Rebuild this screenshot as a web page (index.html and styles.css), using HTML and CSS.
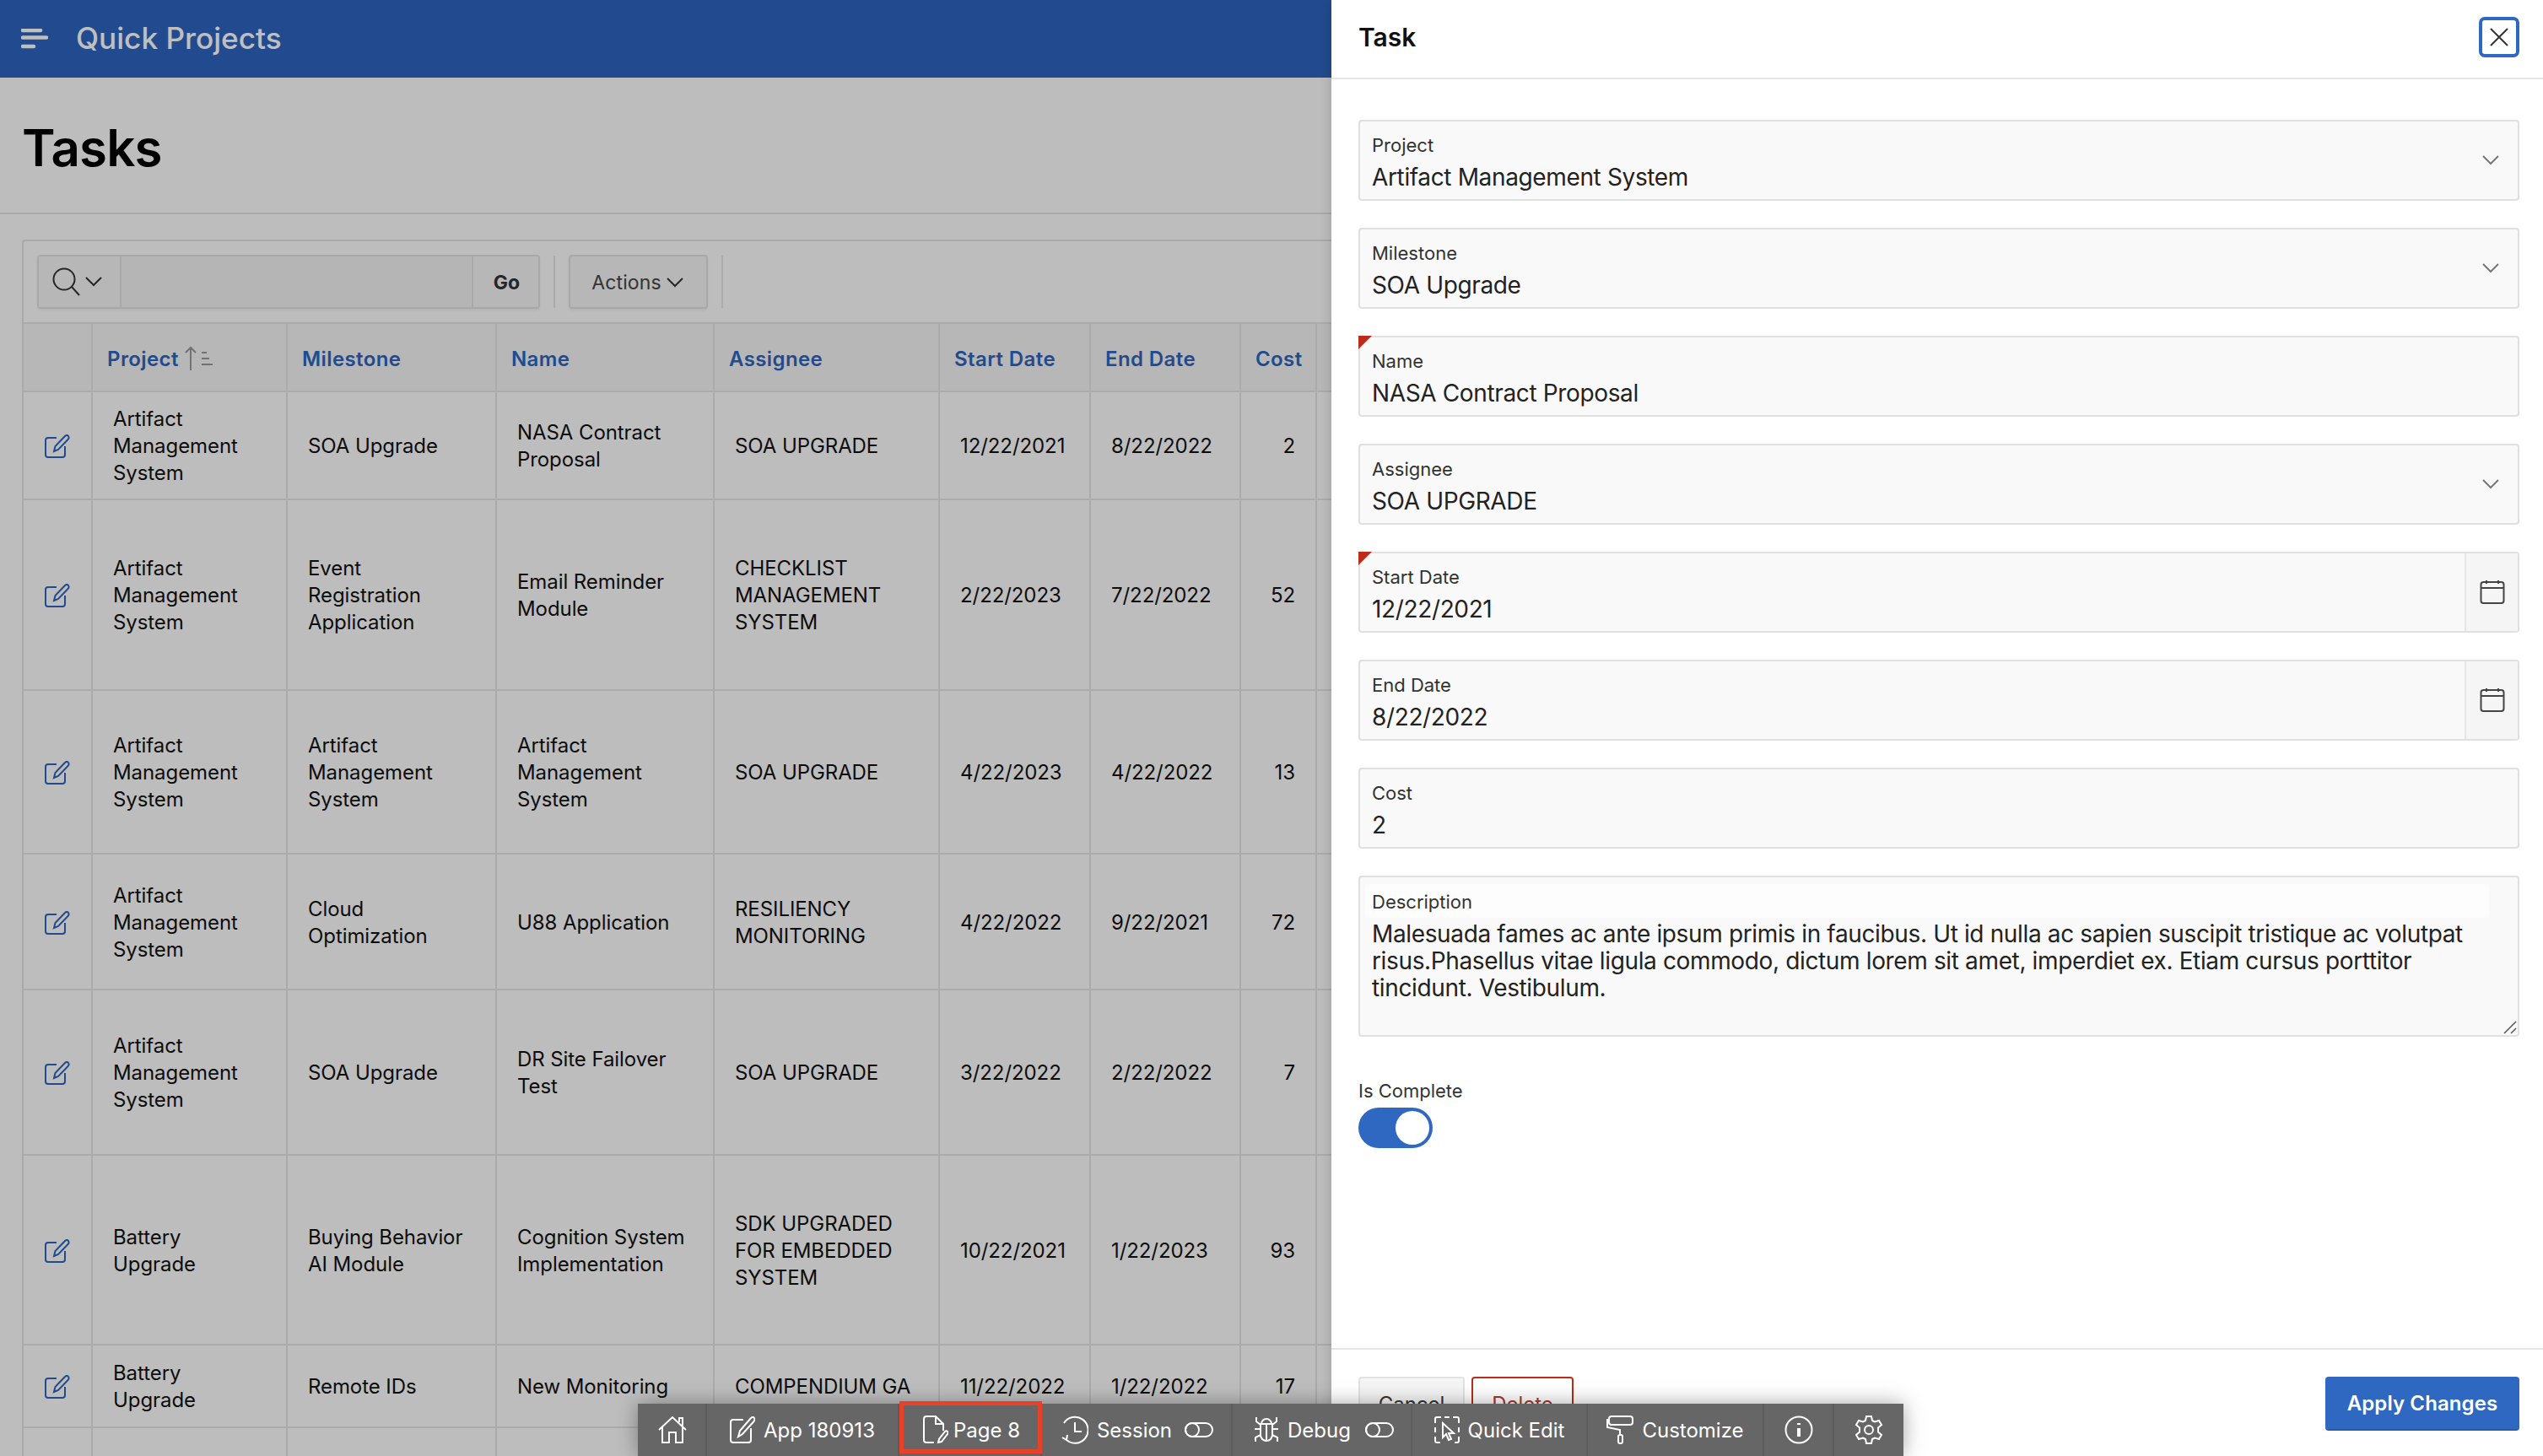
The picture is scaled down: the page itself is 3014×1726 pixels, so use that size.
FILE: index.html
```html
<!DOCTYPE html>
<html lang="en">
<head>
<meta charset="utf-8">
<title>Tasks - Quick Projects</title>
<link rel="stylesheet" href="styles.css">
</head>
<body>
<div class="page">
  <header class="topbar">
    <svg class="burger" width="32" height="24" viewBox="0 0 32 24"><path d="M2 2h21M2 10.500h28M2 21h13" /></svg>
    <span class="brand">Quick Projects</span>
  </header>
  <div class="titlebar"><h1>Tasks</h1></div>
  <section class="report">
    <div class="toolbar">
      <div class="searchgroup">
        <div class="searchicon">
          <svg width="34" height="34" viewBox="0 0 34 34" class="ico"><circle cx="14" cy="14" r="12.500"/><path d="M23 23l9 10"/></svg>
          <svg width="20" height="12" viewBox="0 0 20 12" class="ico"><path d="M1 1l9 9 9-9"/></svg>
        </div>
        <div class="searchinput"></div>
        <div class="go">Go</div>
      </div>
      <span class="tsep"></span>
      <div class="actions">Actions <svg width="20" height="12" viewBox="0 0 20 12" class="ico"><path d="M1 1l9 9 9-9"/></svg></div>
      <span class="tsep"></span>
    </div>
    <table class="grid">
      <colgroup>
        <col class="c0"><col class="c1"><col class="c2"><col class="c3"><col class="c4"><col class="c5"><col class="c6"><col class="c7"><col class="c8">
      </colgroup>
      <thead>
        <tr>
          <th></th>
          <th>Project <svg class="sort" width="34" height="30" viewBox="0 0 34 30"><path d="M8 29V2M2 8l6-6 6 6"/><path class="thin" d="M21 8h6M21 15h9M21 22h13"/></svg></th>
          <th>Milestone</th><th>Name</th><th>Assignee</th><th>Start Date</th><th>End Date</th><th>Cost</th><th></th>
        </tr>
      </thead>
      <tbody>
        <tr class="r1">
          <td class="ed"><svg class="edit" viewBox="0 0 30 28"><path d="M14 4H4a3 3 0 0 0-3 3v17a3 3 0 0 0 3 3h17a3 3 0 0 0 3-3V14"/><path d="M11 20l1.500-6L24 2c1.500-1.500 3-1.500 4 0s1 2.500-.500 4L16 18z"/></svg></td>
          <td>Artifact Management System</td><td>SOA Upgrade</td><td>NASA Contract Proposal</td><td>SOA UPGRADE</td><td>12/22/2021</td><td>8/22/2022</td><td class="num">2</td><td></td>
        </tr>
        <tr class="r2">
          <td class="ed"><svg class="edit" viewBox="0 0 30 28"><path d="M14 4H4a3 3 0 0 0-3 3v17a3 3 0 0 0 3 3h17a3 3 0 0 0 3-3V14"/><path d="M11 20l1.500-6L24 2c1.500-1.500 3-1.500 4 0s1 2.500-.500 4L16 18z"/></svg></td>
          <td>Artifact Management System</td><td>Event Registration Application</td><td>Email Reminder Module</td><td>CHECKLIST MANAGEMENT SYSTEM</td><td>2/22/2023</td><td>7/22/2022</td><td class="num">52</td><td></td>
        </tr>
        <tr class="r3">
          <td class="ed"><svg class="edit" viewBox="0 0 30 28"><path d="M14 4H4a3 3 0 0 0-3 3v17a3 3 0 0 0 3 3h17a3 3 0 0 0 3-3V14"/><path d="M11 20l1.500-6L24 2c1.500-1.500 3-1.500 4 0s1 2.500-.500 4L16 18z"/></svg></td>
          <td>Artifact Management System</td><td>Artifact Management System</td><td>Artifact Management System</td><td>SOA UPGRADE</td><td>4/22/2023</td><td>4/22/2022</td><td class="num">13</td><td></td>
        </tr>
        <tr class="r4">
          <td class="ed"><svg class="edit" viewBox="0 0 30 28"><path d="M14 4H4a3 3 0 0 0-3 3v17a3 3 0 0 0 3 3h17a3 3 0 0 0 3-3V14"/><path d="M11 20l1.500-6L24 2c1.500-1.500 3-1.500 4 0s1 2.500-.500 4L16 18z"/></svg></td>
          <td>Artifact Management System</td><td>Cloud Optimization</td><td>U88 Application</td><td>RESILIENCY MONITORING</td><td>4/22/2022</td><td>9/22/2021</td><td class="num">72</td><td></td>
        </tr>
        <tr class="r5">
          <td class="ed"><svg class="edit" viewBox="0 0 30 28"><path d="M14 4H4a3 3 0 0 0-3 3v17a3 3 0 0 0 3 3h17a3 3 0 0 0 3-3V14"/><path d="M11 20l1.500-6L24 2c1.500-1.500 3-1.500 4 0s1 2.500-.500 4L16 18z"/></svg></td>
          <td>Artifact Management System</td><td>SOA Upgrade</td><td>DR Site Failover Test</td><td>SOA UPGRADE</td><td>3/22/2022</td><td>2/22/2022</td><td class="num">7</td><td></td>
        </tr>
        <tr class="r6">
          <td class="ed"><svg class="edit" viewBox="0 0 30 28"><path d="M14 4H4a3 3 0 0 0-3 3v17a3 3 0 0 0 3 3h17a3 3 0 0 0 3-3V14"/><path d="M11 20l1.500-6L24 2c1.500-1.500 3-1.500 4 0s1 2.500-.500 4L16 18z"/></svg></td>
          <td>Battery Upgrade</td><td>Buying Behavior AI Module</td><td>Cognition System Implementation</td><td>SDK UPGRADED FOR EMBEDDED SYSTEM</td><td>10/22/2021</td><td>1/22/2023</td><td class="num">93</td><td></td>
        </tr>
        <tr class="r7">
          <td class="ed"><svg class="edit" viewBox="0 0 30 28"><path d="M14 4H4a3 3 0 0 0-3 3v17a3 3 0 0 0 3 3h17a3 3 0 0 0 3-3V14"/><path d="M11 20l1.500-6L24 2c1.500-1.500 3-1.500 4 0s1 2.500-.500 4L16 18z"/></svg></td>
          <td>Battery Upgrade</td><td>Remote IDs</td><td>New Monitoring</td><td>COMPENDIUM GA</td><td>11/22/2022</td><td>1/22/2022</td><td class="num">17</td><td></td>
        </tr>
        <tr class="r8"><td></td><td></td><td></td><td></td><td></td><td></td><td></td><td></td><td></td></tr>
      </tbody>
    </table>
  </section>
</div>
<div class="scrim"></div>

<aside class="modal">
  <div class="modal-head">
    <h2>Task</h2>
    <div class="close"><svg width="22" height="22" viewBox="0 0 22 22" class="x"><path d="M1 1l20 20M21 1L1 21"/></svg></div>
  </div>
  <div class="modal-body">
    <div class="field">
      <div class="field-main"><label>Project</label><div class="val">Artifact Management System</div></div>
      <svg class="chev" width="20" height="12" viewBox="0 0 20 12"><path d="M1 1l9 9 9-9"/></svg>
    </div>
    <div class="field">
      <div class="field-main"><label>Milestone</label><div class="val">SOA Upgrade</div></div>
      <svg class="chev" width="20" height="12" viewBox="0 0 20 12"><path d="M1 1l9 9 9-9"/></svg>
    </div>
    <div class="field req">
      <div class="field-main"><label>Name</label><div class="val">NASA Contract Proposal</div></div>
    </div>
    <div class="field">
      <div class="field-main"><label>Assignee</label><div class="val">SOA UPGRADE</div></div>
      <svg class="chev" width="20" height="12" viewBox="0 0 20 12"><path d="M1 1l9 9 9-9"/></svg>
    </div>
    <div class="field req">
      <div class="field-main"><label>Start Date</label><div class="val">12/22/2021</div></div>
      <div class="cal"><svg width="30" height="30" viewBox="0 0 30 30"><rect x="1.500" y="3" width="27" height="25" rx="3"/><path d="M1.500 10h27M8 1v4M22 1v4"/></svg></div>
    </div>
    <div class="field">
      <div class="field-main"><label>End Date</label><div class="val">8/22/2022</div></div>
      <div class="cal"><svg width="30" height="30" viewBox="0 0 30 30"><rect x="1.500" y="3" width="27" height="25" rx="3"/><path d="M1.500 10h27M8 1v4M22 1v4"/></svg></div>
    </div>
    <div class="field">
      <div class="field-main"><label>Cost</label><div class="val">2</div></div>
    </div>
    <div class="field area">
      <label>Description</label>
      <div class="val">Malesuada fames ac ante ipsum primis in faucibus. Ut id nulla ac sapien suscipit tristique ac volutpat risus.Phasellus vitae ligula commodo, dictum lorem sit amet, imperdiet ex. Etiam cursus porttitor tincidunt. Vestibulum.</div>
      <svg class="grip" width="16" height="16" viewBox="0 0 16 16"><path d="M1 15L15 1M9 15l6-6"/></svg>
    </div>
    <div class="switch-field">
      <label>Is Complete</label>
      <div class="switch"><span class="knob"></span></div>
    </div>
  </div>
  <div class="modal-foot">
    <div class="btn cancel">Cancel</div>
    <div class="btn delete">Delete</div>
    <div class="btn apply">Apply Changes</div>
  </div>
</aside>

<nav class="devbar">
  <div class="dv s-home"><svg class="di" width="34" height="34" viewBox="0 0 34 34"><path d="M1 17L17 2l16 15M5 14v18h8V20h8v12h8V14M25 8V3h4v9"/></svg></div>
  <div class="dv s-app"><svg class="di" width="30" height="32" viewBox="0 0 30 32"><path d="M16 4H4a3 3 0 0 0-3 3v21a3 3 0 0 0 3 3h18a3 3 0 0 0 3-3V14"/><path d="M10 24l2-7L25 2c1.500-1.500 3-1.500 4 0s.500 3-1 4.500L15 21z"/></svg><span>App 180913</span></div>
  <div class="dv s-page"><svg class="di" width="30" height="34" viewBox="0 0 30 34"><path d="M13 32H4a3 3 0 0 1-3-3V4a3 3 0 0 1 3-3h11l9 9v8"/><path d="M15 1v9h9"/><path d="M18 32l1-4 7-9c1-1 2-1 3 0s1 2 0 3l-7 9z"/></svg><span>Page 8</span></div>
  <div class="dv s-session"><svg class="di" width="32" height="34" viewBox="0 0 32 34"><path d="M6 29A15.500 15.500 0 1 0 3 9M16 8v11h8M1 26l5 3 1-6"/></svg><span>Session</span><svg class="di tg" width="34" height="20" viewBox="0 0 34 20"><rect x="1" y="2" width="32" height="16" rx="8"/><circle cx="9" cy="10" r="8"/></svg></div>
  <div class="dv s-debug"><svg class="di" width="30" height="32" viewBox="0 0 30 32"><path d="M9 9a6 6 0 0 1 12 0zM8 9h14v13a7 7 0 0 1-14 0zM15 9v20M8 15H1M22 15h7M8 22l-6 3v5M22 22l6 3v5M8 10L3 6V1M22 10l5-4V1"/></svg><span>Debug</span><svg class="di tg" width="34" height="20" viewBox="0 0 34 20"><rect x="1" y="2" width="32" height="16" rx="8"/><circle cx="9" cy="10" r="8"/></svg></div>
  <div class="dv s-quick"><svg class="di" width="30" height="32" viewBox="0 0 30 32"><path d="M8 1H3a2 2 0 0 0-2 2v5M1 13v6M1 24v5a2 2 0 0 0 2 2h4M12 1h6M22 1h5a2 2 0 0 1 2 2v5M29 13v6M29 24v5a2 2 0 0 1-2 2h-3"/><path d="M10 8v17l4-4 3 7 3-1-3-7h6z"/></svg><span>Quick Edit</span></div>
  <div class="dv s-custom"><svg class="di" width="32" height="34" viewBox="0 0 32 34"><rect x="3" y="1" width="28" height="10" rx="3"/><path d="M3 5H1v9l15 3v6"/><rect x="14" y="23" width="5" height="10" rx="2"/></svg><span>Customize</span></div>
  <div class="dv s-info"><svg class="di" width="34" height="34" viewBox="0 0 34 34"><circle cx="17" cy="17" r="15.500"/><path class="bold" d="M17 15v10M17 9v2"/></svg></div>
  <div class="dv s-gear"><svg class="di" width="34" height="34" viewBox="0 0 34 34"><circle cx="17" cy="17" r="5"/><path d="M14 1h6l1 5 3 1.500 5-1.500 3 5-4 3.500v5l4 3.500-3 5-5-1.500-3 1.500-1 5h-6l-1-5-3-1.500-5 1.500-3-5 4-3.500v-5L2 11l3-5 5 1.500L13 6z"/></svg></div>
</nav>
</body>
</html>
```
FILE: styles.css
```css
* { box-sizing: border-box; }
html, body { margin: 0; height: 100%; overflow: hidden; }
body {
  font-family: Inter, "Liberation Sans", sans-serif;
  color: #111;
  background: #fff;
  position: relative;
  width: 3014px;
  height: 1726px;
}
svg { display: block; fill: none; }

/* page under the drawer */
.page { width: 1578px; height: 1726px; overflow: hidden; background: #fdfdfd; }
.topbar {
  height: 92px;
  background: #2d65be;
  display: flex;
  align-items: center;
  padding-left: 25px;
  gap: 33px;
  color: #fff;
}
.burger path { stroke: #fff; stroke-width: 4.500; stroke-linecap: round; }
.brand { font-size: 35.200px; font-weight: 500; margin-bottom: 2px; }
.titlebar {
  height: 162px;
  padding-left: 26px;
  display: flex;
  align-items: center;
  border-bottom: 2px solid #e2e2e2;
}
.titlebar h1 { margin: 6px 0 0; font-size: 60px; font-weight: 600; letter-spacing: -0.8px; color: #000; }

.report {
  margin: 30px 0 0 26px;
  border: 2px solid #e2e2e2;
  border-right: 0;
  border-radius: 4px 0 0 0;
}
.toolbar { height: 96px; display: flex; align-items: center; padding: 0 0 0 16px; gap: 16px; }
.searchgroup {
  width: 596px;
  height: 64px;
  display: flex;
  border: 2px solid #e0e0e0;
  border-radius: 4px;
  box-shadow: 0 2px 3px rgba(0,0,0,.06);
}
.searchicon { width: 98px; display: flex; align-items: center; justify-content: center; gap: 5px; padding-right: 6px; background: #f5f5f5; border-right: 2px solid #e0e0e0; }
.ico { stroke: #333; stroke-width: 2; }
.searchinput { flex: 1; background: #f2f2f2; }
.go { width: 79px; display: flex; align-items: center; justify-content: center; padding: 2px 0 0 2px; background: #f5f5f5; border-left: 2px solid #e0e0e0; font-size: 23px; font-weight: 700; color: #333; }
.tsep { width: 2px; height: 62px; background: #e4e4e4; }
.actions {
  width: 165px;
  height: 64px;
  display: flex;
  align-items: center;
  justify-content: center;
  gap: 6px;
  padding: 2px 2px 0 0;
  background: #f5f5f5;
  border: 2px solid #e0e0e0;
  border-radius: 4px;
  font-size: 23px;
  letter-spacing: 0.1px;
  color: #444;
  box-shadow: 0 2px 3px rgba(0,0,0,.06);
}

.grid { table-layout: fixed; border-collapse: collapse; width: 1632px; font-size: 24px; line-height: 32px; }
.c0 { width: 81px; } .c1 { width: 231px; } .c2 { width: 248px; } .c3 { width: 258px; } .c4 { width: 267px; }
.c5 { width: 179px; } .c6 { width: 178px; } .c7 { width: 90px; } .c8 { width: 100px; }
.grid th {
  height: 81px;
  padding: 4px 8px 0 17px;
  background: #f4f4f4;
  text-align: left;
  font-weight: 600;
  letter-spacing: 0.4px;
  color: #2d65be;
  border: 2px solid #e4e4e4;
  border-bottom: 0;
  white-space: nowrap;
}
.grid th:first-child { border-left: 0; }
.grid th .sort { display: inline-block; vertical-align: middle; margin: -4px 0 0 0; }
.sort path { stroke: #999; stroke-width: 2; }
.sort .thin { stroke-width: 2; }
.grid td {
  padding: 2px 28px 0 24px;
  border: 2px solid #e4e4e4;
  vertical-align: middle;
  letter-spacing: -0.08px;
  color: #111;
}
.grid td:first-child { border-left: 0; padding: 2px 0 0; }
.grid .num { text-align: right; padding-right: 24px; }
.r1 { height: 128px; } .r2 { height: 226px; } .r3 { height: 194px; } .r4 { height: 161px; }
.r5 { height: 196px; } .r6 { height: 225px; } .r7 { height: 98px; } .r8 { height: 100px; }
.edit { width: 30px; height: 28px; margin: 0 auto; stroke: #2d65be; stroke-width: 2; }

/* modal scrim */
.scrim { position: absolute; inset: 0; background: rgba(0,0,0,.25); }

/* drawer */
.modal {
  position: absolute;
  top: 0; right: 0; bottom: 0;
  width: 1436px;
  background: #fff;
  display: flex;
  flex-direction: column;
  box-shadow: 0 0 14px rgba(0,0,0,.16);
}
.modal-head {
  height: 94px;
  flex: none;
  display: flex;
  align-items: center;
  justify-content: space-between;
  padding: 0 28px 4px 32px;
  border-bottom: 2px solid #e6e6e6;
}
.modal-head h2 { margin: 0; font-size: 30px; font-weight: 600; color: #111; }
.close {
  width: 48px; height: 48px;
  display: flex; align-items: center; justify-content: center;
  border: 4px solid #2f68c0;
  border-radius: 7px;
}
.x path { stroke: #333; stroke-width: 2; }
.modal-body { flex: 1; padding: 48px 28px 0 32px; display: flex; flex-direction: column; gap: 32px; }
.field {
  position: relative;
  height: 96px;
  flex: none;
  display: flex;
  align-items: center;
  background: #f9f9f9;
  border: 2px solid #e0e0e0;
  border-radius: 4px;
}
.field.req::before {
  content: "";
  position: absolute;
  left: -2px; top: -2px;
  width: 16px; height: 16px;
  background: #bc2c18;
  clip-path: polygon(0 0, 100% 0, 0 100%);
}
.field-main { flex: 1; padding-left: 14px; height: 100%; min-width: 0; }
label { display: block; font-size: 22px; line-height: 28px; color: #333; }
.field-main label { margin-top: 14px; }
.val { font-size: 28px; line-height: 32px; letter-spacing: -0.36px; color: #222; margin-top: 8px; }
.chev { margin-right: 22px; flex: none; stroke: #777; stroke-width: 2; }
.cal {
  width: 63px; height: 100%;
  flex: none;
  display: flex; align-items: center; justify-content: center;
  background: #f5f5f5;
  border-left: 2px solid #e6e6e6;
}
.cal svg { stroke: #444; stroke-width: 2; }
.field.area { height: 191px; display: block; padding: 8px 0 0 6px; }
.field.area label { width: 1332px; height: 40px; padding: 7px 0 0 8px; background: #fdfdfd; border-radius: 4px; }
.field.area .val { margin: 3px 24px 0 8px; }
.grip { position: absolute; right: 1px; bottom: 1px; stroke: #555; stroke-width: 1.500; }
.switch-field { margin-top: 18px; }
.switch-field label { color: #333; margin-bottom: 6px; }
.switch { width: 88px; height: 48px; border-radius: 24px; background: #2f68c0; position: relative; }
.knob { position: absolute; right: 4px; top: 4px; width: 40px; height: 40px; border-radius: 50%; background: #fff; }

.modal-foot {
  height: 128px;
  flex: none;
  border-top: 2px solid #e6e6e6;
  padding: 32px 28px 0 32px;
  display: flex;
  gap: 8px;
}
.btn {
  height: 64px;
  display: flex; align-items: center; justify-content: center;
  font-size: 24px;
  border-radius: 4px;
}
.cancel { width: 126px; background: #f5f5f5; border: 2px solid #e2e2e2; color: #333; }
.delete { width: 121px; background: #fff; border: 2px solid #b92c17; color: #a9382a; }
.apply { width: 230px; margin-left: auto; background: #2f68c0; color: #fff; font-weight: 600; letter-spacing: 0.1px; border-bottom: 2px solid #2a5cab; }

/* developer toolbar */
.devbar {
  position: absolute;
  left: 756px; top: 1664px;
  width: 1500px; height: 62px;
  display: flex;
  background: #666;
  color: #fff;
  font-size: 24px;
  box-shadow: 0 0 24px rgba(0,0,0,.35);
}
.dv { position: relative; flex: none; display: flex; align-items: center; justify-content: center; gap: 10px; border-right: 2px solid #5c5c5c; }
.dv:last-child { border-right: 0; }
.di { stroke: #fff; stroke-width: 2; }
.di .bold { stroke-width: 4; }
.tg { margin-left: 7px; }
.s-session .tg { margin-left: 5px; }
.s-page { gap: 6px; padding-left: 4px; }
.s-home { width: 82px; padding-left: 2px; }
.s-app { width: 228px; }
.s-page { width: 169px; }
.s-page::after {
  content: "";
  position: absolute;
  left: 0; right: -2px; top: -3px; bottom: 3px;
  border: 5px solid #e8412a;
}
.s-session { width: 226px; padding-left: 2px; }
.s-debug { width: 213px; padding-left: 5px; }
.s-quick { width: 208px; }
.s-custom { width: 209px; }
.s-info { width: 83px; }
.s-gear { width: 82px; }
```
